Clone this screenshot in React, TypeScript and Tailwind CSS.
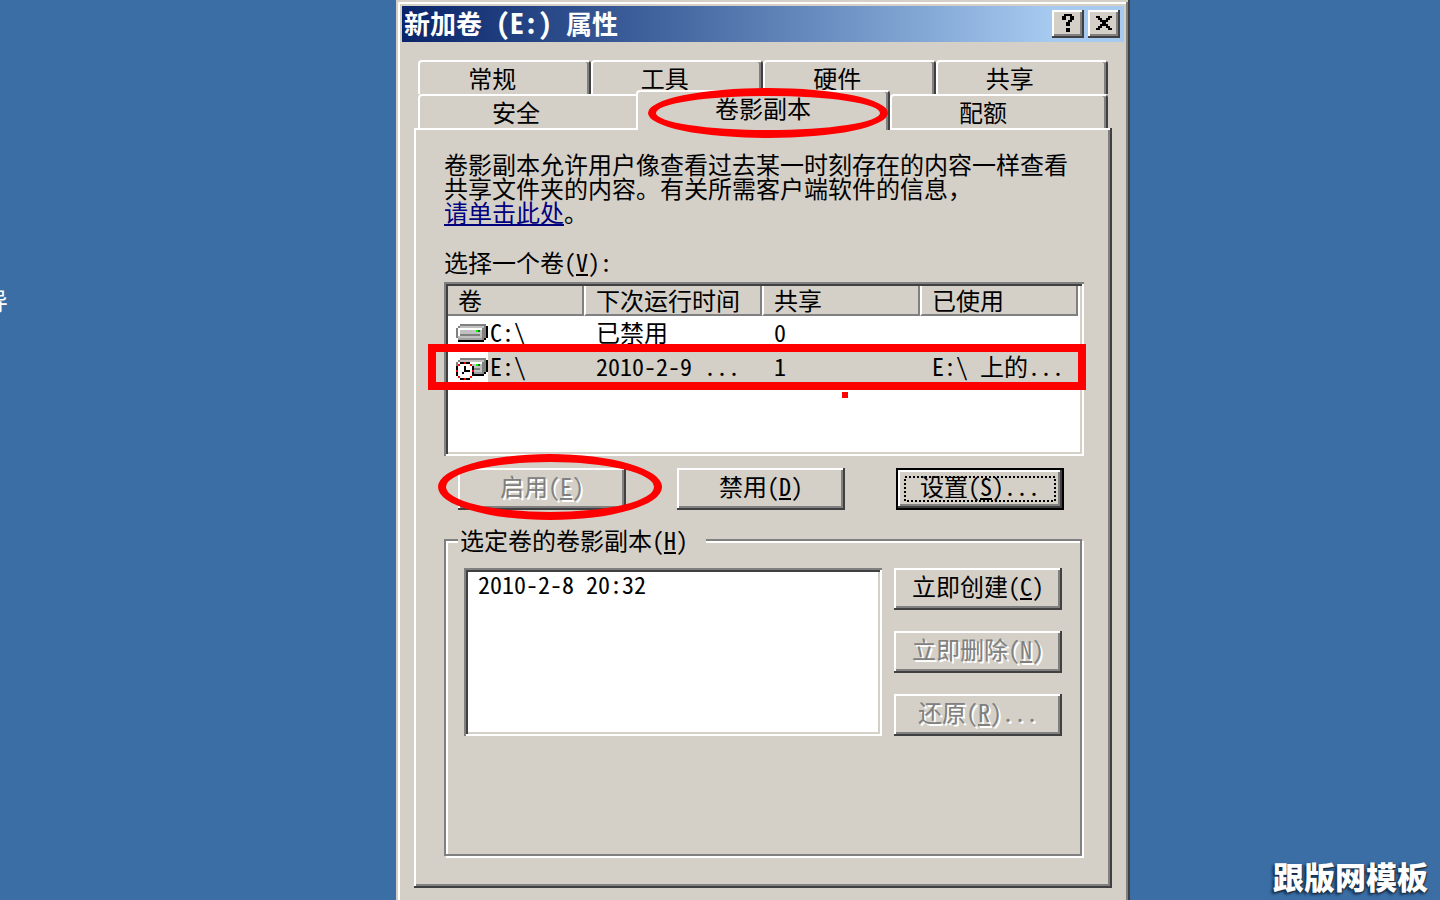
import type { ReactNode } from 'react';

const sunken =
  'p-1 bg-white shadow-[inset_2px_2px_0_#808080,inset_-2px_-2px_0_#fff,inset_4px_4px_0_#404040,inset_-4px_-4px_0_#d4d0c8]';

const raised =
  'shadow-[inset_-2px_-2px_0_#404040,inset_2px_2px_0_#fff,inset_-4px_-4px_0_#808080]';

function Key({ children }: { children: string }) {
  return (
    <>
      (<u className="underline decoration-2 underline-offset-2">{children}</u>)
    </>
  );
}

type TabProps = { children: ReactNode; selected?: boolean; beforeSelected?: boolean; mark?: ReactNode };

function Tab({ children, selected, beforeSelected, mark }: TabProps) {
  return (
    <button
      type="button"
      role="tab"
      aria-selected={!!selected}
      className={
        'flex items-start justify-center rounded-tl-[4px] border-t-2 border-l-2 border-t-white border-l-white bg-[#d4d0c8] pt-1 ' +
        (beforeSelected ? '' : 'rounded-tr-[4px] border-r-2 border-r-[#404040] shadow-[inset_-2px_0_0_#808080] ') +
        (selected ? 'relative z-10 -mt-1 -mb-0.5' : 'h-[34px] pr-6')
      }
    >
      {children}
      {mark}
    </button>
  );
}

function PushButton({ children, disabled, isDefault }: { children: ReactNode; disabled?: boolean; isDefault?: boolean }) {
  return (
    <button
      type="button"
      disabled={disabled}
      className={
        'relative flex h-[42px] w-[168px] items-center justify-center pb-1.5 ' +
        raised +
        (disabled ? ' text-[#808080] [text-shadow:2px_2px_0_#fff]' : '') +
        (isDefault ? ' border-2 border-black pb-1' : '')
      }
    >
      {children}
      {isDefault && (
        <svg className="absolute inset-x-1.5 inset-y-1.5 h-[26px] w-[152px]" aria-hidden="true" shapeRendering="crispEdges">
          <rect x="1" y="1" width="150" height="24" fill="none" stroke="#000" strokeWidth="2" strokeDasharray="2 2" />
        </svg>
      )}
    </button>
  );
}

function Drive({ clock }: { clock?: boolean }) {
  return (
    <svg width="32" height="24" viewBox="0 0 16 12" shapeRendering="crispEdges" aria-hidden="true" className="shrink-0">
      <path d="M2 1h13v1h1v6h-1v1h-1v1H1V9h13V2H2z" fill="#000" />
      <path d="M2 1h13v1H2zM1 2h1v1H1zM0 3h1v5H0z" fill="#808080" />
      <path d="M2 2h12v1H2z" fill="#c0c0c0" />
      <path d="M1 3h12v5H1z" fill="#c0c0c0" />
      <path d="M1 3h12v1H1zM1 4h1v3H1z" fill="#fff" />
      <path d="M13 3h1v6h-1zM14 2h1v6h-1zM2 6h10v1H2z" fill="#808080" />
      <path d="M1 8h12v1H1z" fill="#a0a0a0" />
      <path d="M10 4h1v1h-1z" fill="#0f0" />
      <path d="M11 4h1v1h-1z" fill="#008000" />
      {clock && (
        <>
          <path d="M2 3h5v1h1v1h1v5H8v1H7v1H2v-1H1v-1H0V5h1V4h1z" fill="#000" />
          <path d="M2 4h5v1h1v5H7v1H2v-1H1V5h1z" fill="#fff" />
          <path d="M4 5h1v2h2v1H4zM3 8h1v1H3z" fill="#000" />
          <path d="M4 3h1v1H4zM4 11h1v1H4zM0 7h1v1H0zM8 7h1v1H8zM1 4h1v1H1zM7 4h1v1H7zM1 10h1v1H1zM7 10h1v1H7z" fill="#f00" />
        </>
      )}
    </svg>
  );
}

const headers = ['卷', '下次运行时间', '共享', '已使用'];

const volumes = [
  { name: 'C:\\', next: '已禁用', shares: '0', used: '', active: false },
  { name: 'E:\\', next: '2010-2-9 ...', shares: '1', used: 'E:\\ 上的...', active: true },
];

export default function App() {
  return (
    <div className="relative grid min-h-screen grid-cols-[396fr_734fr_310fr] overflow-hidden bg-[#3a6ea5] font-['Noto_Sans_CJK_SC',sans-serif] text-[24px] leading-6 whitespace-nowrap text-black [font-feature-settings:'hwid']">
      <div className="relative text-white">
        <span className="absolute top-[288px] -left-4">导</span>
      </div>

      <main className="flex min-h-screen flex-col bg-[#d4d0c8] pt-1.5 shadow-[inset_-2px_0_0_#404040,inset_2px_2px_0_#d4d0c8,inset_-4px_0_0_#808080,inset_4px_4px_0_#fff]">
        <header className="mx-1.5 flex h-9 items-center gap-1 bg-linear-to-r from-[#0a246a] to-[#a6caf0] to-90% pr-1 pl-0.5">
          <h1 className="mr-auto pb-1 text-[26px] leading-7 font-bold text-white">
            新加卷<span className="text-[28px]"> (E:) </span>属性
          </h1>
          <button type="button" aria-label="帮助" className={'flex h-7 w-8 items-center justify-center bg-[#d4d0c8] ' + raised}>
            <svg width="12" height="18" viewBox="0 0 6 9" shapeRendering="crispEdges" aria-hidden="true" className="mb-0.5">
              <path d="M1 0h4v1h1v2H5v1H4v2H2V4h1V3h1V1H2v2H0V1h1zM2 7h2v2H2z" />
            </svg>
          </button>
          <button type="button" aria-label="关闭" className={'flex h-7 w-8 items-center justify-center bg-[#d4d0c8] ' + raised}>
            <svg width="16" height="14" viewBox="0 0 8 7" shapeRendering="crispEdges" aria-hidden="true" className="mb-0.5">
              <path d="M0 0h2v1h1v1h2V1h1V0h2v1H7v1H6v1H5v1h1v1h1v1h1v1H6V6H5V5H3v1H2v1H0V6h1V5h1V4h1V3H2V2H1V1H0z" />
            </svg>
          </button>
        </header>

        <div className="flex grow flex-col px-[18px] pt-[18px] pb-3">
          <div role="tablist" className="px-1">
            <div className="grid grid-cols-4">
              <Tab>常规</Tab>
              <Tab>工具</Tab>
              <Tab>硬件</Tab>
              <Tab>共享</Tab>
            </div>
            <div className="grid grid-cols-[218fr_254fr_218fr]">
              <Tab beforeSelected>安全</Tab>
              <Tab
                selected
                mark={<span className="pointer-events-none absolute -top-1 right-0 -bottom-2 left-2.5 rounded-[50%] border-8 border-[#f00]" />}
              >
                卷影副本
              </Tab>
              <Tab>
                <span className="pr-2">配额</span>
              </Tab>
            </div>
          </div>

          <section className="grow pt-6 pr-7 pb-[30px] pl-[30px] shadow-[inset_0_-2px_0_#404040,inset_-2px_0_0_#404040,inset_2px_2px_0_#fff,inset_-4px_-4px_0_#808080]">
            <p className="[font-feature-settings:normal]">
              卷影副本允许用户像查看过去某一时刻存在的内容一样查看
              <br />
              共享文件夹的内容。有关所需客户端软件的信息，
              <br />
              <a href="#help" className="text-[#000080] underline decoration-2 underline-offset-2">
                请单击此处
              </a>
              。
            </p>

            <h2 id="volumes" className="mt-[26px]">
              选择一个卷<Key>V</Key>:
            </h2>
            <div className={'relative mt-2 h-[174px] ' + sunken}>
              <table aria-labelledby="volumes" className="w-full table-fixed border-separate border-spacing-0 pr-0.5 text-left">
                <colgroup>
                  <col className="w-[136px]" />
                  <col className="w-[178px]" />
                  <col className="w-[158px]" />
                  <col />
                </colgroup>
                <thead>
                  <tr className="h-[30px]">
                    {headers.map((h, i) => (
                      <th
                        key={h}
                        className={
                          'border-r-2 border-b-2 border-r-[#808080] border-b-[#808080] bg-[#d4d0c8] p-0 pl-2.5 font-normal ' +
                          (i > 0 ? 'border-l-2 border-l-white' : '')
                        }
                      >
                        {h}
                      </th>
                    ))}
                  </tr>
                </thead>
                <tbody>
                  {volumes.map((v) => (
                    <tr key={v.name} className="h-[34px]">
                      <td className="p-0">
                        <div className="flex h-[34px] items-stretch pl-2">
                          <span className="flex items-center pt-0.5">
                            <Drive clock={v.active} />
                          </span>
                          <span className={'flex grow items-center pb-0.5 pl-0.5 ' + (v.active ? 'bg-[#d4d0c8]' : '')}>{v.name}</span>
                        </div>
                      </td>
                      {[v.next, v.shares, v.used].map((text, i) => (
                        <td key={i} className={'p-0 pb-0.5 pl-3 ' + (v.active ? 'bg-[#d4d0c8]' : '')}>
                          {text}
                        </td>
                      ))}
                    </tr>
                  ))}
                </tbody>
              </table>
              <span className="pointer-events-none absolute top-[62px] -right-0.5 -left-4 h-[46px] border-8 border-[#f00]" />
              <span className="pointer-events-none absolute top-[110px] left-[398px] size-1.5 bg-[#f00]" />
            </div>

            <div className="mt-3 flex justify-between pr-5 pl-3.5">
              <div className="relative">
                <PushButton disabled>
                  启用<Key>E</Key>
                </PushButton>
                <span className="pointer-events-none absolute -top-3.5 -right-9 -bottom-2.5 -left-5 rounded-[50%] border-8 border-[#f00]" />
              </div>
              <PushButton>
                禁用<Key>D</Key>
              </PushButton>
              <PushButton isDefault>
                设置<Key>S</Key>...
              </PushButton>
            </div>

            <fieldset className="mt-[18px] mr-0.5 h-[328px] border-2 border-[#808080] pr-[18px] pl-[18px] shadow-[2px_2px_0_#fff,inset_2px_2px_0_#fff]">
              <legend className="-ml-1.5 bg-[#d4d0c8] pr-[18px] pl-0.5">
                选定卷的卷影副本<Key>H</Key>
              </legend>
              <div className="mt-4 flex h-[168px] gap-3">
                <ul className={'grow ' + sunken}>
                  <li className="pl-2.5">2010-2-8 20:32</li>
                </ul>
                <div className="flex flex-col justify-between">
                  <PushButton>
                    立即创建<Key>C</Key>
                  </PushButton>
                  <PushButton disabled>
                    立即删除<Key>N</Key>
                  </PushButton>
                  <PushButton disabled>
                    还原<Key>R</Key>...
                  </PushButton>
                </div>
              </div>
            </fieldset>
          </section>
        </div>
      </main>

      <div className="flex items-end justify-end pr-3 pb-2">
        <span className="text-[31px] leading-8 font-black text-white [text-shadow:-2px_2px_3px_#102a48,1px_1px_1px_#333]">跟版网模板</span>
      </div>
    </div>
  );
}
